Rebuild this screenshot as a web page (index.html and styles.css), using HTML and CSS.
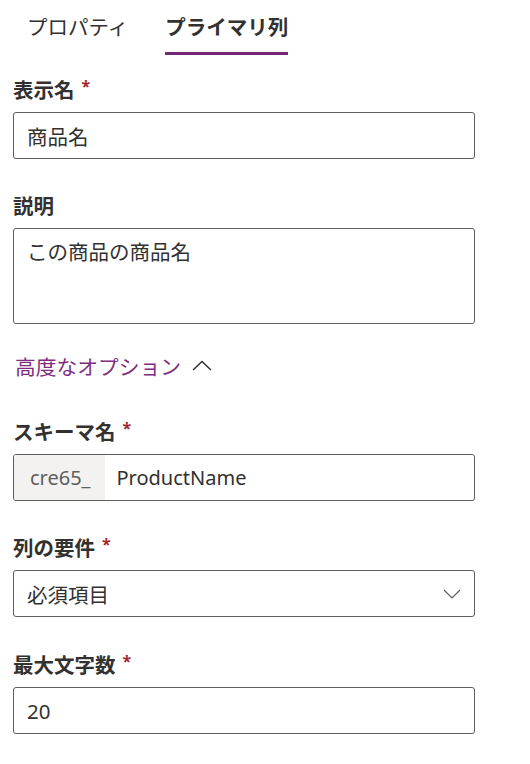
FILE: index.html
```html
<!DOCTYPE html>
<html lang="ja">
<head>
<meta charset="utf-8">
<link rel="stylesheet" href="styles.css">
</head>
<body>
<div class="panel">
  <div class="tabs">
    <div class="tab">プロパティ</div>
    <div class="tab active">プライマリ列</div>
  </div>

  <div class="field first">
    <div class="label">表示名<span class="req">*</span></div>
    <div class="box"><span class="val">商品名</span></div>
  </div>

  <div class="field">
    <div class="label">説明</div>
    <div class="box area"><span class="val">この商品の商品名</span></div>
  </div>

  <div class="advanced">
    <span class="link">高度なオプション</span>
    <svg class="chev-up" width="20" height="11" viewBox="0 0 20 11"><polyline points="1,10 10,1.5 19,10" fill="none" stroke="#323130" stroke-width="1.5"/></svg>
  </div>

  <div class="field">
    <div class="label">スキーマ名<span class="req">*</span></div>
    <div class="box prefixed">
      <span class="prefix">cre65_</span>
      <span class="val">ProductName</span>
    </div>
  </div>

  <div class="field">
    <div class="label">列の要件<span class="req">*</span></div>
    <div class="box select">
      <span class="val">必須項目</span>
      <svg class="chev-down" width="18" height="10" viewBox="0 0 18 10"><polyline points="1,1 9,9 17,1" fill="none" stroke="#605e5c" stroke-width="1.2"/></svg>
    </div>
  </div>

  <div class="field last">
    <div class="label">最大文字数<span class="req">*</span></div>
    <div class="box"><span class="val">20</span></div>
  </div>
</div>
</body>
</html>
```

FILE: styles.css
```css
* { box-sizing: border-box; }
html, body { margin: 0; padding: 0; background: #ffffff; }
body {
  font-family: "Segoe UI", "Noto Sans", "Noto Sans CJK JP", sans-serif;
  color: #323130;
  font-size: 20px;
}
.panel {
  width: 462px;
  margin-left: 13px;
  padding-top: 12px;
}
.tabs {
  display: flex;
  gap: 37px;
  padding-left: 14px;
}
.tab {
  font-family: "Noto Sans CJK JP", sans-serif;
  font-size: 20.5px;
  line-height: 28px;
  color: #323130;
  padding-bottom: 12px;
  border-bottom: 3px solid transparent;
}
.tab.active {
  font-weight: 700;
  border-bottom-color: #742774;
}
.field { margin-top: 32px; }
.field.first { margin-top: 20px; }
.field.last { margin-top: 33px; }
.label {
  font-family: "Noto Sans CJK JP", sans-serif;
  font-weight: 700;
  font-size: 20.5px;
  line-height: 28px;
  height: 28px;
  margin-bottom: 9px;
  display: flex;
  align-items: flex-start;
}
.req {
  color: #a4262c;
  font-family: "Noto Sans", sans-serif;
  font-weight: 700;
  font-size: 16px;
  line-height: 22px;
  margin-left: 7px;
}
.box {
  border: 1px solid #605e5c;
  border-radius: 3px;
  height: 47px;
  display: flex;
  align-items: center;
  padding: 0 13px;
  overflow: hidden;
}
.val {
  font-family: "Segoe UI", "Noto Sans", "Noto Sans CJK JP", sans-serif;
  font-size: 20.5px;
  color: #323130;
}
.box.area {
  height: 96px;
  align-items: flex-start;
  padding-top: 7px;
}
.box.prefixed { padding: 0; }
.box.prefixed .val { font-size: 20px; }
.prefix {
  background: #f3f2f1;
  color: #605e5c;
  height: 100%;
  display: flex;
  align-items: center;
  padding: 0 14px 0 16px;
  font-size: 20px;
  margin-right: 12px;
}
.box.select { justify-content: space-between; }
.advanced {
  margin-top: 28px;
  height: 28px;
  display: flex;
  align-items: center;
  gap: 11px;
  padding-left: 2px;
}
.link {
  font-family: "Noto Sans CJK JP", sans-serif;
  color: #7e2d80;
  font-size: 20.75px;
  line-height: 28px;
}
.chev-up { margin-top: -2px; }
.advanced + .field { margin-top: 37px; }
```
